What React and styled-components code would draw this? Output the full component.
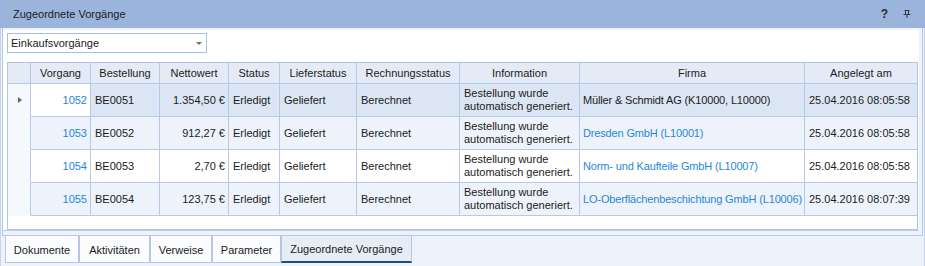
import React from 'react';
import styled, { createGlobalStyle } from 'styled-components';

const Global = createGlobalStyle`
  html, body { margin: 0; padding: 0; background: #eef2fa; }
  body { font-family: "Liberation Sans", Arial, sans-serif; font-size: 11px; color: #1b1b1b; }
  * { box-sizing: border-box; }
`;

const Window = styled.div`
  width: 925px;
  height: 266px;
  display: flex;
  flex-direction: column;
  background: #eef2fa;
  overflow: hidden;
`;

const TitleBar = styled.div`
  height: 28px;
  flex: none;
  background: #9bb4dc;
  display: flex;
  align-items: center;
  padding: 0 14px 0 13px;
`;

const Title = styled.div`
  flex: 1;
  font-size: 11px;
  color: #1c1c1c;
`;

const TitleIcons = styled.div`
  display: flex;
  align-items: center;
  gap: 15px;
  color: #2a2a2a;
`;

const Help = styled.span`
  font-weight: bold;
  font-size: 12px;
  line-height: 12px;
`;

const Body = styled.div`
  flex: 1;
  display: flex;
  flex-direction: column;
  padding-left: 2px;
  border-left: 1px solid #c6d4eb;
  border-right: 1px solid #c6d4eb;
`;

const TabPage = styled.div`
  width: 921px;
  height: 208px;
  margin-left: -1px;
  border: 1px solid #b5c7e5;
  border-top: none;
  padding: 2px 3px 4px 0;
  background: #eef2fa;
`;

const Panel = styled.div`
  width: 916px;
  height: 201px;
  background: #ffffff;
  border-bottom: 1px solid #bccde8;
  padding: 3px 0 0 4px;
  display: flex;
  flex-direction: column;
`;

const Select = styled.div`
  width: 200px;
  height: 20px;
  border: 1px solid #a9bfe2;
  background: #fff;
  display: flex;
  align-items: center;
  justify-content: space-between;
  padding: 0 4px 0 3px;
  margin-bottom: 9px;
  flex: none;
`;

const Arrow = styled.span`
  width: 0;
  height: 0;
  border-left: 3px solid transparent;
  border-right: 3px solid transparent;
  border-top: 3px solid #707070;
`;

const GridBox = styled.div`
  width: 911px;
  height: 168px;
  border: 1px solid #b1c5e3;
  background: #fff;
  display: grid;
  grid-template-columns: 23px 60px 69px 69px 51px 77px 103px 120px 225px 112px;
  grid-template-rows: 21px repeat(4, 33px);
  align-content: start;
`;

const Cell = styled.div`
  border-right: 1px solid #b7c9e6;
  border-bottom: 1px solid #b7c9e6;
  background: ${p => p.$bg};
  color: ${p => (p.$link ? '#1e88d6' : '#1b1b1b')};
  display: flex;
  align-items: center;
  justify-content: ${p => (p.$right ? 'flex-end' : 'flex-start')};
  padding: ${p => (p.$tight ? '0 1px 0 3px' : '0 3px 0 4px')};
  letter-spacing: ${p => (p.$tight ? '-0.15px' : 'normal')};
  white-space: nowrap;
  overflow: hidden;
  line-height: 13px;
  &:nth-child(10n) { border-right: none; }
`;

const HeadCell = styled.div`
  border-right: 1px solid #b7c9e6;
  border-bottom: 1px solid #b7c9e6;
  background: #e4ebf6;
  display: flex;
  align-items: center;
  justify-content: center;
  color: #1b1b1b;
  white-space: nowrap;
  &:nth-child(10n) { border-right: none; }
`;

const Indicator = styled.div`
  border-right: 1px solid #b7c9e6;
  border-bottom: 1px solid transparent;
  background: #f5f8fc;
  display: flex;
  align-items: center;
  padding-left: 10px;
`;

const RowMark = styled.span`
  width: 0;
  height: 0;
  border-top: 3.5px solid transparent;
  border-bottom: 3.5px solid transparent;
  border-left: 4px solid #666;
`;

const TabStrip = styled.div`
  display: flex;
  padding-left: 2px;
`;

const Tab = styled.div`
  width: ${p => p.$w}px;
  height: 27px;
  border: 1px solid #b5c7e5;
  border-top: none;
  border-bottom: ${p => (p.$active ? '2px solid #1f4f7d' : '1px solid #b5c7e5')};
  background: ${p => (p.$active ? '#e7edf7' : '#fbfcfe')};
  display: flex;
  align-items: center;
  justify-content: center;
  padding-top: 1px;
  color: #1b1b1b;
  white-space: nowrap;
`;

const PinIcon = () => (
  <svg width="8" height="8" viewBox="0 0 8 8" fill="none" stroke="#3a3a3a" strokeWidth="1">
    <path d="M1.5 0.5H6.5M2.5 0.5V4.5M5.5 0.5V4.5M0.5 4.5H7.5M4 4.5V8" />
  </svg>
);

const columns = ['', 'Vorgang', 'Bestellung', 'Nettowert', 'Status', 'Lieferstatus', 'Rechnungsstatus', 'Information', 'Firma', 'Angelegt am'];

const rows = [
  { id: '1052', best: 'BE0051', wert: '1.354,50 €', firma: 'Müller & Schmidt AG (K10000, L10000)', date: '25.04.2016 08:05:58' },
  { id: '1053', best: 'BE0052', wert: '912,27 €', firma: 'Dresden GmbH (L10001)', date: '25.04.2016 08:05:58' },
  { id: '1054', best: 'BE0053', wert: '2,70 €', firma: 'Norm- und Kaufteile GmbH (L10007)', date: '25.04.2016 08:05:58' },
  { id: '1055', best: 'BE0054', wert: '123,75 €', firma: 'LO-Oberflächenbeschichtung GmbH (L10006)', date: '25.04.2016 08:07:39' },
];

const tabs = [
  { label: 'Dokumente', w: 74 },
  { label: 'Aktivitäten', w: 71 },
  { label: 'Verweise', w: 62 },
  { label: 'Parameter', w: 69 },
  { label: 'Zugeordnete Vorgänge', w: 131, active: true },
];

export default function App() {
  return (
    <Window>
      <Global />
      <TitleBar>
        <Title>Zugeordnete Vorgänge</Title>
        <TitleIcons>
          <Help>?</Help>
          <PinIcon />
        </TitleIcons>
      </TitleBar>
      <Body>
        <TabPage>
          <Panel>
            <Select>
              <span>Einkaufsvorgänge</span>
              <Arrow />
            </Select>
            <GridBox>
              {columns.map((c, i) => (
                <HeadCell key={i}>{c}</HeadCell>
              ))}
              {rows.map((r, i) => {
                const sel = i === 0;
                const bg = sel ? '#dce5f3' : i % 2 === 1 ? '#eef3fb' : '#ffffff';
                return (
                  <React.Fragment key={r.id}>
                    <Indicator>{sel && <RowMark />}</Indicator>
                    <Cell $bg={sel ? '#ffffff' : bg} $right $link>{r.id}</Cell>
                    <Cell $bg={bg}>{r.best}</Cell>
                    <Cell $bg={bg} $right>{r.wert}</Cell>
                    <Cell $bg={bg}>Erledigt</Cell>
                    <Cell $bg={bg}>Geliefert</Cell>
                    <Cell $bg={bg}>Berechnet</Cell>
                    <Cell $bg={bg}>Bestellung wurde<br />automatisch generiert.</Cell>
                    <Cell $bg={bg} $link={!sel} $tight>{r.firma}</Cell>
                    <Cell $bg={bg}>{r.date}</Cell>
                  </React.Fragment>
                );
              })}
            </GridBox>
          </Panel>
        </TabPage>
        <TabStrip>
          {tabs.map(t => (
            <Tab key={t.label} $w={t.w} $active={t.active}>{t.label}</Tab>
          ))}
        </TabStrip>
      </Body>
    </Window>
  );
}
